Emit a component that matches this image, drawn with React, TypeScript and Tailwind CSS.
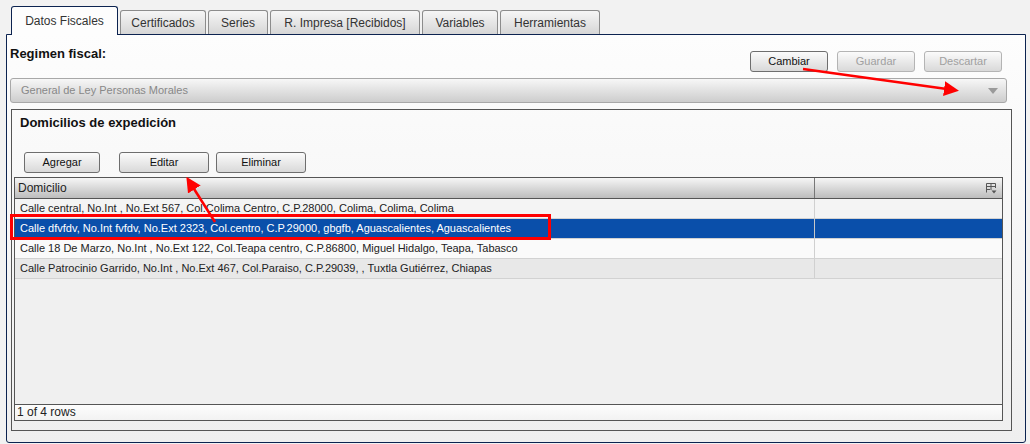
import React from 'react';

const tabs = [
  { label: 'Datos Fiscales', w: 'w-[107px]', active: true },
  { label: 'Certificados', w: 'w-[86px]', active: false },
  { label: 'Series', w: 'w-[60px]', active: false },
  { label: 'R. Impresa [Recibidos]', w: 'w-[150px]', active: false },
  { label: 'Variables', w: 'w-[76px]', active: false },
  { label: 'Herramientas', w: 'w-[100px]', active: false },
];

const rows = [
  { text: 'Calle central, No.Int , No.Ext 567, Col.Colima Centro, C.P.28000, Colima, Colima, Colima', bg: 'bg-[#f4f4f4]' },
  { text: 'Calle dfvfdv, No.Int fvfdv, No.Ext 2323, Col.centro, C.P.29000, gbgfb, Aguascalientes, Aguascalientes', bg: 'bg-[#0a4faa]', selected: true },
  { text: 'Calle 18 De Marzo, No.Int , No.Ext 122, Col.Teapa centro, C.P.86800, Miguel Hidalgo, Teapa, Tabasco', bg: 'bg-[#fafafa]' },
  { text: 'Calle Patrocinio Garrido, No.Int , No.Ext 467, Col.Paraiso, C.P.29039, , Tuxtla Gutiérrez, Chiapas', bg: 'bg-[#e8e8e8]' },
];

function Btn({ label, w, disabled, className = '' }: { label: string; w: string; disabled?: boolean; className?: string }) {
  return (
    <button
      className={`${w} ${className} block h-[21px] rounded-[3px] border bg-gradient-to-b from-[#fbfbfb] to-[#d9d9d9] text-[11px] leading-none ${
        disabled ? 'border-[#b4b4b4] text-[#a0a0a0]' : 'border-[#6e6e6e] text-[#111]'
      }`}
    >
      {label}
    </button>
  );
}

export default function App() {
  return (
    <div
      className="relative w-[1030px] h-[444px] bg-[#f2f2f2] overflow-hidden text-[#222]"
      style={{ fontFamily: '"Liberation Sans", Arial, sans-serif' }}
    >
      {/* tabs */}
      <div className="flex items-end h-[34px] pl-[11px] gap-[2px]">
        {tabs.map((t) =>
          t.active ? (
            <div
              key={t.label}
              className={`${t.w} h-[29px] -mb-px z-10 rounded-t-[3px] border border-b-0 border-[#0c2350] bg-[#fdfdfd] flex items-center justify-center text-[12px] text-[#333]`}
            >
              {t.label}
            </div>
          ) : (
            <div
              key={t.label}
              className={`${t.w} h-[24px] rounded-t-[3px] border border-b-0 border-[#8c8c8c] bg-gradient-to-b from-[#f6f6f6] to-[#d6d6d6] flex items-center justify-center text-[12px] text-[#333]`}
            >
              {t.label}
            </div>
          )
        )}
      </div>

      {/* panel */}
      <div className="ml-[6px] w-[1020px] h-[409px] border border-[#0c2350] rounded-b-[3px] bg-gradient-to-b from-[#fdfdfd] to-[#efefef]">
        <div className="flex justify-between h-[38px] pl-[3px] pr-[23px]">
          <div className="pt-[11px] text-[13px] leading-[16px] font-bold text-[#111]">Regimen fiscal:</div>
          <div className="flex items-start gap-[9px] pt-[16px]">
            <Btn label="Cambiar" w="w-[78px]" />
            <Btn label="Guardar" w="w-[78px]" disabled />
            <Btn label="Descartar" w="w-[78px]" disabled />
          </div>
        </div>

        {/* dropdown */}
        <div className="mt-[5px] ml-[3px] w-[997px] h-[25px] rounded-[3px] border border-[#a8a8a8] bg-gradient-to-b from-[#f7f7f7] to-[#cdcdcd] flex items-center justify-between pl-[10px] pr-[8px]">
          <span className="text-[11px] text-[#888]">General de Ley Personas Morales</span>
          <svg width="10" height="6" viewBox="0 0 10 6">
            <path d="M0 0 H10 L5 6 Z" fill="#9a9a9a" />
          </svg>
        </div>

        {/* domicilios box */}
        <div className="mt-[6px] ml-[4px] w-[1001px] h-[322px] border border-[#555] flex flex-col">
          <div className="pt-[5px] pl-[8px] text-[13px] leading-[16px] font-bold text-[#111]">Domicilios de expedición</div>
          <div className="flex items-start h-[21px] mt-[21px] ml-[12px]">
            <Btn label="Agregar" w="w-[76px]" />
            <Btn label="Editar" w="w-[90px]" className="ml-[19px]" />
            <Btn label="Eliminar" w="w-[90px]" className="ml-[7px]" />
          </div>

          {/* grid */}
          <div className="mt-[4px] ml-[2px] w-[989px] h-[244px] border border-[#555] flex flex-col bg-[#f0f0f0]">
            <div className="flex h-[21px] border-b border-[#555] bg-gradient-to-b from-[#f6f6f6] to-[#bdbdbd] text-[12px] text-[#222]">
              <div className="w-[800px] border-r border-[#777] pl-[3px] flex items-center">Domicilio</div>
              <div className="flex-1 flex items-center justify-end pr-[5px]">
                <svg width="11" height="11" viewBox="0 0 11 11" fill="none" stroke="#555" strokeWidth="1">
                  <path d="M0.5 9.5 V0.5 H9.5 V5" />
                  <path d="M0.5 3.5 H9.5 M5 0.5 V7 M0.5 6.5 H4" />
                  <path d="M5.5 7.5 H10.5 L8 10.5 Z" fill="#555" stroke="none" />
                </svg>
              </div>
            </div>
            {rows.map((r) => (
              <div
                key={r.text}
                className={`flex h-[20px] border-b border-[#d2d2d2] ${r.bg} ${r.selected ? 'text-white' : 'text-[#222]'} text-[11px]`}
              >
                <div className={`w-[800px] border-r ${r.selected ? 'border-[#c8c8c8]' : 'border-[#d0d0d0]'} pl-[5px] flex items-center whitespace-nowrap`}>
                  {r.text}
                </div>
                <div className="flex-1" />
              </div>
            ))}
            <div className="flex-1" />
            <div className="h-[16px] border-t border-[#555] bg-gradient-to-b from-[#fdfdfd] to-[#f2f2f2] pl-[2px] text-[12px] leading-[14px] text-[#222]">
              1 of 4 rows
            </div>
          </div>
        </div>
      </div>

      {/* annotations */}
      <div className="absolute left-[10px] top-[214px] w-[541px] h-[26px] border-[3px] border-[#ff0000] pointer-events-none" />
      <svg className="absolute inset-0 pointer-events-none" width="1030" height="444">
        <defs>
          <marker id="ah" markerWidth="6" markerHeight="6" refX="4" refY="3" orient="auto" markerUnits="strokeWidth">
            <path d="M0 0 L6 3 L0 6 Z" fill="#ff0000" />
          </marker>
        </defs>
        <line x1="215" y1="222" x2="189" y2="181" stroke="#ff0000" strokeWidth="2.5" markerEnd="url(#ah)" />
        <line x1="803" y1="69" x2="954" y2="90" stroke="#ff0000" strokeWidth="2.5" markerEnd="url(#ah)" />
      </svg>
    </div>
  );
}
